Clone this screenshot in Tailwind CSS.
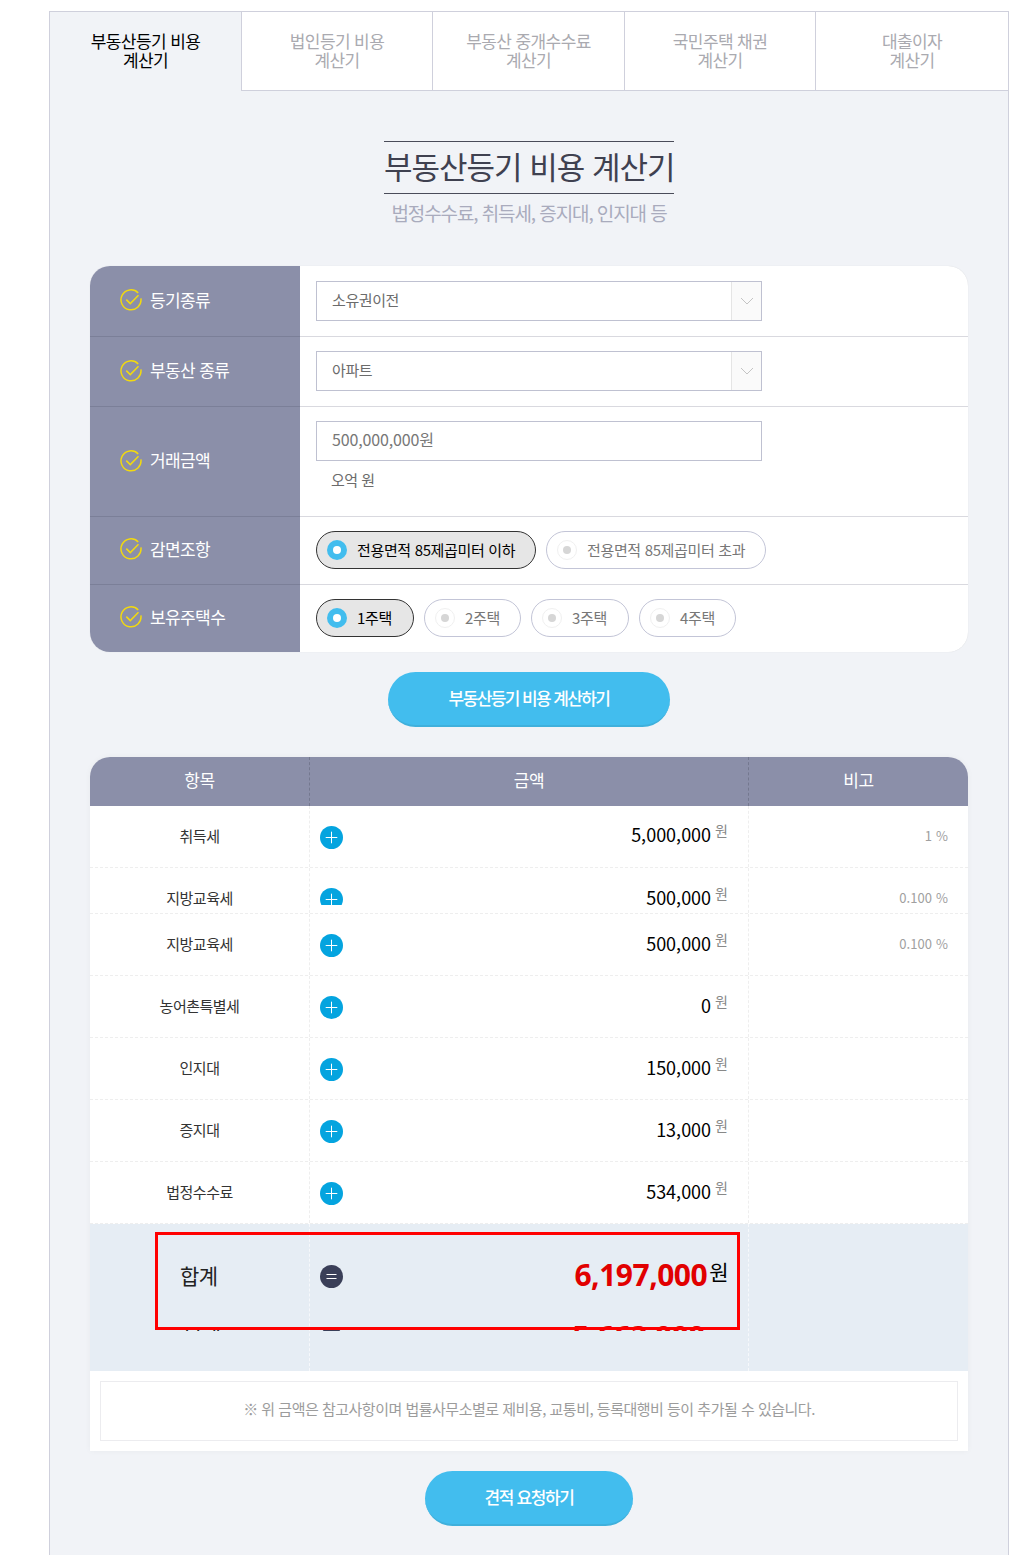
<!DOCTYPE html>
<html lang="ko">
<head>
<meta charset="utf-8">
<script src="https://cdn.jsdelivr.net/npm/@tailwindcss/browser@4"></script>
</head>
<body class="bg-white font-['Noto_Sans_CJK_KR','Noto_Sans',sans-serif] overflow-hidden">
<svg class="hidden"><defs>
<symbol id="chk" viewBox="0 0 22 22"><path d="M18.2 3.9A10 10 0 1 0 20.9 9.4" fill="none" stroke="#f2d90f" stroke-width="1.5"/><path d="M6.3 10.6l4 4 8.2-8.4" fill="none" stroke="#f2d90f" stroke-width="1.5"/></symbol>
<symbol id="plus" viewBox="0 0 23 23"><circle cx="11.5" cy="11.5" r="11.5" fill="#04a4df"/><path d="M5.7 11.5h11.6M11.5 5.7v11.6" stroke="#fff" stroke-width="1"/></symbol>
<symbol id="eq" viewBox="0 0 23 23"><circle cx="11.5" cy="11.5" r="11.5" fill="#3a3f58"/><path d="M6.5 9.5h10M6.5 13.5h10" stroke="#fff" stroke-width="1"/></symbol>
<symbol id="arr" viewBox="0 0 14 8"><path d="M1 1l6 6 6-6" fill="none" stroke="#c4c4c4" stroke-width="1"/></symbol>
</defs></svg>
<div class="h-[1555px] pt-[11px] pl-[49px] w-[1036px]">
<div class="relative w-[960px] h-[1600px] bg-[#f1f3f7] border-x border-t border-[#cfd0dc]">
  <!-- tabs -->
  <div class="flex h-[79px] text-[17px] leading-[19px] tracking-[-0.6px] text-center">
    <div class="w-[191px] pt-[19px] text-black">부동산등기 비용<br>계산기</div>
    <div class="w-[191px] pt-[19px] text-[#aaaab0] bg-white border-l border-b border-[#cfd0dc]">법인등기 비용<br>계산기</div>
    <div class="w-[192px] pt-[19px] text-[#aaaab0] bg-white border-l border-b border-[#cfd0dc]">부동산 중개수수료<br>계산기</div>
    <div class="w-[191px] pt-[19px] text-[#aaaab0] bg-white border-l border-b border-[#cfd0dc]">국민주택 채권<br>계산기</div>
    <div class="w-[193px] pt-[19px] text-[#aaaab0] bg-white border-l border-b border-[#cfd0dc]">대출이자<br>계산기</div>
  </div>
  <!-- title -->
  <div class="flex flex-col items-center pt-[50px]">
    <h1 class="w-[290px] h-[53px] border-y border-[#4a4c59] text-[31px] leading-[48px] text-[#3f4150] text-center tracking-[-1px] whitespace-nowrap font-normal">부동산등기 비용 계산기</h1>
    <p class="mt-[6px] text-[19px] leading-[26px] text-[#a9abbd] tracking-[-1.1px]">법정수수료, 취득세, 증지대, 인지대 등</p>
  </div>
  <!-- form -->
  <div class="mx-[40px] mt-[40px] w-[878px] h-[386px] bg-white rounded-[20px] overflow-hidden text-[#6b6b6b] shadow-[0_0_1px_rgba(0,0,0,0.15)]">
    <div class="flex h-[71px] border-b border-[#d9d9df]">
      <div class="w-[210px] -mb-px bg-[#8b8fa9] border-b border-[#7b7f98] flex items-center pl-[30px] pb-[2px] gap-[8px] text-[17px] text-white tracking-[-0.6px]"><svg class="w-[22px] h-[22px]"><use href="#chk"/></svg><span class="-mt-[1px]">등기종류</span></div>
      <div class="pl-[16px] pt-[15px]"><div class="w-[446px] h-[40px] border border-[#bfc1d1] flex items-center justify-between pl-[15px] text-[15px] leading-[20px] tracking-[-0.4px]"><span class="-mt-[2px]">소유권이전</span><span class="w-[30px] h-full bg-[#fafafa] border-l border-[#e5e5e5] flex items-center justify-center"><svg class="w-[14px] h-[8px]"><use href="#arr"/></svg></span></div></div>
    </div>
    <div class="flex h-[70px] border-b border-[#d9d9df]">
      <div class="w-[210px] -mb-px bg-[#8b8fa9] border-b border-[#7b7f98] flex items-center pl-[30px] pb-[2px] gap-[8px] text-[17px] text-white tracking-[-0.6px]"><svg class="w-[22px] h-[22px]"><use href="#chk"/></svg><span class="-mt-[1px]">부동산 종류</span></div>
      <div class="pl-[16px] pt-[14px]"><div class="w-[446px] h-[40px] border border-[#bfc1d1] flex items-center justify-between pl-[15px] text-[15px] leading-[20px] tracking-[-0.4px]"><span class="-mt-[2px]">아파트</span><span class="w-[30px] h-full bg-[#fafafa] border-l border-[#e5e5e5] flex items-center justify-center"><svg class="w-[14px] h-[8px]"><use href="#arr"/></svg></span></div></div>
    </div>
    <div class="flex h-[110px] border-b border-[#d9d9df]">
      <div class="w-[210px] -mb-px bg-[#8b8fa9] border-b border-[#7b7f98] flex items-center pl-[30px] pb-[2px] gap-[8px] text-[17px] text-white tracking-[-0.6px]"><svg class="w-[22px] h-[22px]"><use href="#chk"/></svg><span class="-mt-[1px]">거래금액</span></div>
      <div class="pl-[16px] pt-[14px]"><div class="w-[446px] h-[40px] border border-[#bfc1d1] flex items-center pl-[15px] text-[16px] text-[#777] tracking-[-0.15px]"><span class="-mt-[4px]">500,000,000원</span></div><p class="pl-[15px] mt-[9px] text-[15px] leading-[20px] tracking-[-0.5px]">오억 원</p></div>
    </div>
    <div class="flex h-[68px] border-b border-[#d9d9df]">
      <div class="w-[210px] -mb-px bg-[#8b8fa9] border-b border-[#7b7f98] flex items-center pl-[30px] pb-[3px] gap-[8px] text-[17px] text-white tracking-[-0.6px]"><svg class="w-[22px] h-[22px]"><use href="#chk"/></svg><span class="-mt-[1px]">감면조항</span></div>
      <div class="pl-[16px] pt-[14px] flex gap-[10px] text-[15px] tracking-[-0.35px]">
        <div class="w-[220px] h-[38px] rounded-full border border-[#333] bg-[#e6e6e6] text-black flex items-center pl-[10px] gap-[10px] whitespace-nowrap"><span class="w-[20px] h-[20px] rounded-full bg-[#42bdee] flex items-center justify-center"><span class="w-[8px] h-[8px] rounded-full bg-white"></span></span>전용면적 85제곱미터 이하</div>
        <div class="w-[220px] h-[38px] rounded-full border border-[#c3c5d7] bg-white text-[#777] flex items-center pl-[10px] gap-[10px] whitespace-nowrap"><span class="w-[20px] h-[20px] rounded-full border border-[#f0f0f0] flex items-center justify-center"><span class="w-[8px] h-[8px] rounded-full bg-[#d6d6d6]"></span></span>전용면적 85제곱미터 초과</div>
      </div>
    </div>
    <div class="flex h-[67px]">
      <div class="w-[210px] bg-[#8b8fa9] flex items-center pl-[30px] pb-[3px] gap-[8px] text-[17px] text-white tracking-[-0.6px]"><svg class="w-[22px] h-[22px]"><use href="#chk"/></svg><span class="-mt-[1px]">보유주택수</span></div>
      <div class="pl-[16px] pt-[14px] flex gap-[10px] text-[15px] tracking-[-0.35px]">
        <div class="w-[98px] h-[38px] rounded-full border border-[#333] bg-[#e6e6e6] text-black flex items-center pl-[10px] gap-[10px] whitespace-nowrap"><span class="w-[20px] h-[20px] rounded-full bg-[#42bdee] flex items-center justify-center"><span class="w-[8px] h-[8px] rounded-full bg-white"></span></span>1주택</div>
        <div class="w-[97px] h-[38px] rounded-full border border-[#c3c5d7] bg-white text-[#777] flex items-center pl-[10px] gap-[10px] whitespace-nowrap"><span class="w-[20px] h-[20px] rounded-full border border-[#f0f0f0] flex items-center justify-center"><span class="w-[8px] h-[8px] rounded-full bg-[#d6d6d6]"></span></span>2주택</div>
        <div class="w-[98px] h-[38px] rounded-full border border-[#c3c5d7] bg-white text-[#777] flex items-center pl-[10px] gap-[10px] whitespace-nowrap"><span class="w-[20px] h-[20px] rounded-full border border-[#f0f0f0] flex items-center justify-center"><span class="w-[8px] h-[8px] rounded-full bg-[#d6d6d6]"></span></span>3주택</div>
        <div class="w-[97px] h-[38px] rounded-full border border-[#c3c5d7] bg-white text-[#777] flex items-center pl-[10px] gap-[10px] whitespace-nowrap"><span class="w-[20px] h-[20px] rounded-full border border-[#f0f0f0] flex items-center justify-center"><span class="w-[8px] h-[8px] rounded-full bg-[#d6d6d6]"></span></span>4주택</div>
      </div>
    </div>
  </div>
  <!-- button -->
  <div class="flex justify-center mt-[20px]">
    <div class="w-[282px] h-[55px] rounded-full bg-[#42bdee] border-b-2 border-[#3fb0dc] text-white text-[17px] font-medium tracking-[-1.6px] flex items-center justify-center pb-[1px]">부동산등기 비용 계산하기</div>
  </div>
  <!-- table -->
  <div class="mx-[40px] mt-[30px] w-[878px] bg-white rounded-t-[20px] shadow-[0_0_6px_rgba(0,0,0,0.04)]">
    <div class="grid grid-cols-[220px_439px_219px] h-[49px] bg-[#8b8fa9] rounded-t-[20px] text-white text-[17px] tracking-[-0.4px] text-center leading-[46px]">
      <div class="border-r border-dashed border-[#74788f]">항목</div>
      <div class="border-r border-dashed border-[#74788f]">금액</div>
      <div>비고</div>
    </div>
    <div class="grid grid-cols-[220px_439px_219px] h-[62px] border-b border-dashed border-[#eeeeee]">
      <div class="border-r border-dashed border-[#eeeeee] text-center text-[15px] text-[#333] leading-[60px] tracking-[-0.5px]">취득세</div>
      <div class="border-r border-dashed border-[#eeeeee] flex justify-between pl-[10px] pr-[20px]"><svg class="w-[23px] h-[23px] mt-[20px]"><use href="#plus"/></svg><span class="text-[18px] text-black leading-[57px]">5,000,000<sup class="text-[14px] text-[#888] -top-[4px] align-[2px] ml-[4px]">원</sup></span></div>
      <div class="text-right pr-[20px] text-[13px] text-[#a0a0a0] leading-[60px] tracking-[0.1px]">1 %</div>
    </div>
    <div class="grid grid-cols-[220px_439px_219px] h-[46px] border-b border-dashed border-[#eeeeee]">
      <div class="border-r border-dashed border-[#eeeeee] text-center text-[15px] text-[#333] leading-[60px] tracking-[-0.5px] h-[45px] overflow-hidden">지방교육세</div>
      <div class="border-r border-dashed border-[#eeeeee] flex justify-between pl-[10px] pr-[20px] h-[45px]"><div class="h-[37px] overflow-hidden"><svg class="w-[23px] h-[23px] mt-[20px]"><use href="#plus"/></svg></div><span class="text-[18px] text-black leading-[59px] h-[45px] overflow-hidden">500,000<sup class="text-[14px] text-[#888] -top-[4px] align-[2px] ml-[4px]">원</sup></span></div>
      <div class="text-right pr-[20px] text-[13px] text-[#a0a0a0] leading-[60px] tracking-[0.1px] h-[45px] overflow-hidden">0.100 %</div>
    </div>
    <div class="grid grid-cols-[220px_439px_219px] h-[62px] border-b border-dashed border-[#eeeeee]">
      <div class="border-r border-dashed border-[#eeeeee] text-center text-[15px] text-[#333] leading-[60px] tracking-[-0.5px]">지방교육세</div>
      <div class="border-r border-dashed border-[#eeeeee] flex justify-between pl-[10px] pr-[20px]"><svg class="w-[23px] h-[23px] mt-[20px]"><use href="#plus"/></svg><span class="text-[18px] text-black leading-[59px]">500,000<sup class="text-[14px] text-[#888] -top-[4px] align-[2px] ml-[4px]">원</sup></span></div>
      <div class="text-right pr-[20px] text-[13px] text-[#a0a0a0] leading-[60px] tracking-[0.1px]">0.100 %</div>
    </div>
    <div class="grid grid-cols-[220px_439px_219px] h-[62px] border-b border-dashed border-[#eeeeee]">
      <div class="border-r border-dashed border-[#eeeeee] text-center text-[15px] text-[#333] leading-[60px] tracking-[-0.5px]">농어촌특별세</div>
      <div class="border-r border-dashed border-[#eeeeee] flex justify-between pl-[10px] pr-[20px]"><svg class="w-[23px] h-[23px] mt-[20px]"><use href="#plus"/></svg><span class="text-[18px] text-black leading-[59px]">0<sup class="text-[14px] text-[#888] -top-[4px] align-[2px] ml-[4px]">원</sup></span></div>
      <div></div>
    </div>
    <div class="grid grid-cols-[220px_439px_219px] h-[62px] border-b border-dashed border-[#eeeeee]">
      <div class="border-r border-dashed border-[#eeeeee] text-center text-[15px] text-[#333] leading-[60px] tracking-[-0.5px]">인지대</div>
      <div class="border-r border-dashed border-[#eeeeee] flex justify-between pl-[10px] pr-[20px]"><svg class="w-[23px] h-[23px] mt-[20px]"><use href="#plus"/></svg><span class="text-[18px] text-black leading-[59px]">150,000<sup class="text-[14px] text-[#888] -top-[4px] align-[2px] ml-[4px]">원</sup></span></div>
      <div></div>
    </div>
    <div class="grid grid-cols-[220px_439px_219px] h-[62px] border-b border-dashed border-[#eeeeee]">
      <div class="border-r border-dashed border-[#eeeeee] text-center text-[15px] text-[#333] leading-[60px] tracking-[-0.5px]">증지대</div>
      <div class="border-r border-dashed border-[#eeeeee] flex justify-between pl-[10px] pr-[20px]"><svg class="w-[23px] h-[23px] mt-[20px]"><use href="#plus"/></svg><span class="text-[18px] text-black leading-[59px]">13,000<sup class="text-[14px] text-[#888] -top-[4px] align-[2px] ml-[4px]">원</sup></span></div>
      <div></div>
    </div>
    <div class="grid grid-cols-[220px_439px_219px] h-[62px] border-b border-dashed border-[#eeeeee]">
      <div class="border-r border-dashed border-[#eeeeee] text-center text-[15px] text-[#333] leading-[60px] tracking-[-0.5px]">법정수수료</div>
      <div class="border-r border-dashed border-[#eeeeee] flex justify-between pl-[10px] pr-[20px]"><svg class="w-[23px] h-[23px] mt-[20px]"><use href="#plus"/></svg><span class="text-[18px] text-black leading-[59px]">534,000<sup class="text-[14px] text-[#888] -top-[4px] align-[2px] ml-[4px]">원</sup></span></div>
      <div></div>
    </div>
    <!-- total -->
    <div class="grid grid-cols-[220px_439px_219px] h-[147px] bg-[#e6edf4] relative">
      <div class="border-r border-dashed border-[#f6f8fb] pl-[90px]"><div class="h-[107px] overflow-hidden pt-[21px] text-[21px] tracking-[-0.5px] text-[#222]"><div class="h-[62px] leading-[60px]">합계</div><div class="h-[62px] leading-[60px] pl-[3px]">부계</div></div></div>
      <div class="border-r border-dashed border-[#f6f8fb] pl-[10px] pr-[20px]"><div class="h-[107px] overflow-hidden pt-[21px]">
        <div class="h-[62px] flex justify-between"><svg class="w-[23px] h-[23px] mt-[20px]"><use href="#eq"/></svg><span class="text-[30px] font-bold text-[#e10000] leading-[60px] tracking-[-0.5px] font-['Noto_Sans','Noto_Sans_CJK_KR',sans-serif]">6,197,000<sup class="text-[21px] text-black font-normal align-[6px] top-0 ml-[2px]">원</sup></span></div>
        <div class="h-[62px] flex justify-between"><svg class="w-[23px] h-[23px] mt-[20px]"><use href="#eq"/></svg><span class="text-[30px] font-bold text-[#e10000] leading-[60px] tracking-[-0.5px] pr-[23px] font-['Noto_Sans','Noto_Sans_CJK_KR',sans-serif]">5,663,000</span></div>
      </div></div>
      <div></div>
      <div class="absolute left-[65px] top-[8px] w-[585px] h-[98px] border-[3px] border-[#ff0000]"></div>
    </div>
    <div class="p-[10px]">
      <div class="h-[60px] border border-[#ececef] text-center text-[15px] text-[#9c9c9c] leading-[54px] tracking-[-0.5px] whitespace-nowrap">※ 위 금액은 참고사항이며 법률사무소별로 제비용, 교통비, 등록대행비 등이 추가될 수 있습니다.</div>
    </div>
  </div>
  <div class="flex justify-center mt-[20px]">
    <div class="w-[208px] h-[55px] rounded-full bg-[#42bdee] border-b-2 border-[#3fb0dc] text-white text-[17px] font-medium tracking-[-1.4px] flex items-center justify-center pb-[1px]">견적 요청하기</div>
  </div>
</div>
</div>
</body>
</html>
